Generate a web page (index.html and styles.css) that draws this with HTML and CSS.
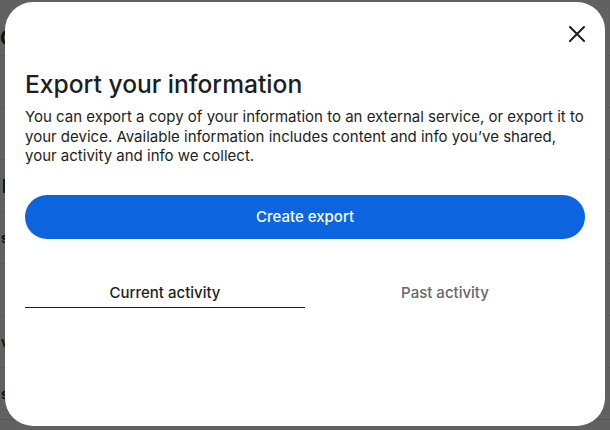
FILE: index.html
```html
<!DOCTYPE html>
<html lang="en">
<head>
    <meta charset="UTF-8">
    <meta name="viewport" content="width=device-width, initial-scale=1.0">
    <title>Export your information</title>
    <link rel="stylesheet" href="styles.css">
</head>
<body>
    <!-- Pagina de fondo (tapada por el modal) -->
    <div class="page">
        <div class="page-title">C</div>
        <div class="page-row"></div>
        <div class="page-row"></div>
        <div class="page-row"><span class="row-icon"></span></div>
        <div class="page-row"><span class="row-text">s</span></div>
        <div class="page-row"></div>
        <div class="page-row"><span class="row-text">v</span></div>
        <div class="page-row"><span class="row-text">s</span></div>
    </div>

    <!-- Modal de exportar -->
    <div class="overlay">
        <div class="dialog">
            <div class="dialog-header">
                <button class="close-btn" aria-label="Close">
                    <svg width="16" height="16" viewBox="0 0 16 16">
                        <path d="M1 1L15 15M15 1L1 15" stroke="#1c1e21" stroke-width="2" stroke-linecap="round"/>
                    </svg>
                </button>
            </div>

            <h1 class="dialog-title">Export your information</h1>
            <p class="dialog-text">You can export a copy of your information to an external service, or export it to your device. Available information includes content and info you’ve shared, your activity and info we collect.</p>

            <button class="btn-primary">Create export</button>

            <div class="tabs">
                <div class="tab active">Current activity</div>
                <div class="tab">Past activity</div>
            </div>
        </div>
    </div>
</body>
</html>
```

FILE: styles.css
```css
* {
    margin: 0;
    padding: 0;
    box-sizing: border-box;
    font-family: 'Inter', 'Liberation Sans', sans-serif;
}

body {
    background-color: #616161;
    height: 100vh;
    overflow: hidden;
}

.page-title {
    height: 56px;
    padding-top: 26px;
    font-size: 20px;
    font-weight: 700;
    line-height: 24px;
    color: #111;
    border-bottom: 1px solid #585858;
}

.page-row {
    height: 52px;
    display: flex;
    align-items: center;
    border-bottom: 1px solid #585858;
}

.row-icon {
    display: inline-block;
    width: 5px;
    height: 14px;
    margin-left: 3px;
    background-color: #151a1f;
}

.row-text {
    font-size: 13px;
    font-weight: 700;
    color: #111;
    margin-left: 1px;
}

.overlay {
    position: fixed;
    top: 0;
    left: 0;
    width: 100%;
    height: 100%;
    padding: 2px 5px 4px 5px;
    display: flex;
}

.dialog {
    flex: 1;
    background-color: #fff;
    border-radius: 28px;
    padding: 0 20px;
}

.dialog-header {
    display: flex;
    justify-content: flex-end;
    padding-top: 14px;
    margin-right: -10px;
    height: 50px;
}

.close-btn {
    width: 36px;
    height: 36px;
    border: none;
    background: none;
    display: flex;
    align-items: center;
    justify-content: center;
    cursor: pointer;
}

.dialog-title {
    font-size: 24.6px;
    font-weight: 500;
    color: #1c1e21;
    line-height: 30px;
    margin-top: 17px;
}

.dialog-text {
    font-size: 15px;
    line-height: 19.5px;
    color: #1c1e21;
    margin-top: 8px;
}

.btn-primary {
    display: block;
    width: 100%;
    height: 44px;
    margin-top: 29px;
    background-color: #0c65de;
    color: #fff;
    border: none;
    border-radius: 22px;
    font-size: 15px;
    font-weight: 500;
    cursor: pointer;
}

.tabs {
    display: flex;
    margin-top: 29px;
}

.tab {
    flex: 1;
    text-align: center;
    font-size: 15px;
    font-weight: 500;
    line-height: 20px;
    padding: 15px 0 4px;
    color: #65676b;
    border-bottom: 1.5px solid transparent;
}

.tab.active {
    color: #1c1e21;
    border-bottom-color: #1c1e21;
}
```
